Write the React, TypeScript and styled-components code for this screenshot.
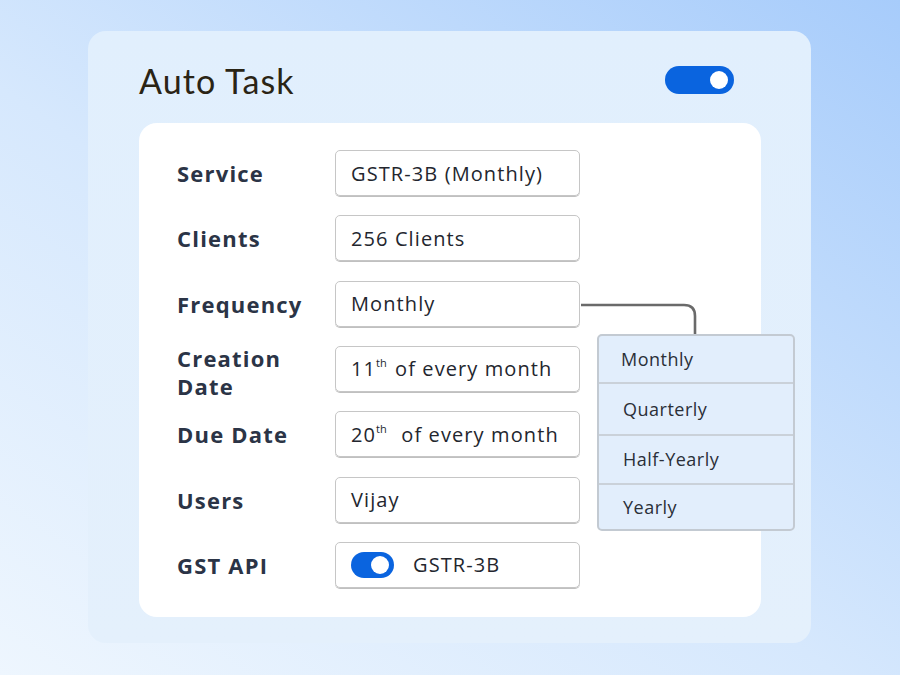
import { FC } from 'react';
import styled, { createGlobalStyle } from 'styled-components';

const GlobalStyle = createGlobalStyle`
  html, body {
    margin: 0;
    padding: 0;
  }
  body {
    width: 900px;
    height: 675px;
    overflow: hidden;
    font-family: 'Open Sans', 'Liberation Sans', sans-serif;
    background: linear-gradient(35deg, #eef6fe 0%, #d6e8fd 45%, #a7ccfb 100%);
  }
`;

const Page = styled.main`
  padding: 31px 0 0 88px;
`;

const Panel = styled.section`
  width: 723px;
  height: 612px;
  box-sizing: border-box;
  padding: 0 77px 26px 51px;
  border-radius: 18px;
  background: linear-gradient(180deg, #e1effd 0%, #e4f0fc 100%);
  display: flex;
  flex-direction: column;
`;

const Header = styled.header`
  height: 92px;
  padding-top: 6px;
  box-sizing: border-box;
  display: flex;
  align-items: center;
  justify-content: space-between;
`;

const Title = styled.h1`
  margin: 0;
  font-family: 'Lato', sans-serif;
  font-weight: 400;
  font-size: 34px;
  letter-spacing: 1.1px;
  color: #2a2415;
`;

const Toggle = styled.span<{ $w: number; $h: number; $knob: number }>`
  width: ${(p) => p.$w}px;
  height: ${(p) => p.$h}px;
  border-radius: ${(p) => p.$h / 2}px;
  background: #0a64df;
  display: flex;
  align-items: center;
  justify-content: flex-end;
  padding-right: ${(p) => (p.$h - p.$knob) / 2 + 1}px;
  box-sizing: border-box;
  flex-shrink: 0;

  &::after {
    content: '';
    width: ${(p) => p.$knob}px;
    height: ${(p) => p.$knob}px;
    border-radius: 50%;
    background: #fff;
  }
`;

const Card = styled.div`
  position: relative;
  width: 622px;
  height: 494px;
  box-sizing: border-box;
  padding: 27px 0 0 38px;
  background: #fff;
  border-radius: 18px;
  display: flex;
  flex-direction: column;
  gap: 19.33px;
`;

const Row = styled.div`
  display: grid;
  grid-template-columns: 158px 245px;
  grid-template-rows: 46px;
  align-items: center;
`;

const Label = styled.span<{ $drop?: number }>`
  font-weight: 700;
  font-size: 22px;
  line-height: 28px;
  letter-spacing: 1.2px;
  color: #2b3446;
  white-space: nowrap;
  margin-top: ${(p) => p.$drop ?? 0}px;
`;

const Field = styled.div`
  position: relative;
  height: 46px;
  box-sizing: border-box;
  border: 1px solid #c6c6c6;
  box-shadow: 0 1px 0 #c0c0c0;
  border-radius: 5px;
  padding: 0 15px;
  display: flex;
  align-items: center;
  gap: 19px;
  font-size: 20px;
  color: #23262e;
  letter-spacing: 1.1px;
  white-space: nowrap;
`;

const Sup = styled.sup`
  font-size: 11px;
  line-height: 0;
  vertical-align: 9px;
  letter-spacing: 0;
  margin-right: 2px;
`;

const Connector = styled.svg`
  position: absolute;
  left: 244px;
  top: 18px;
  overflow: visible;
`;

const Dropdown = styled.ul`
  position: absolute;
  left: 261px;
  top: 52px;
  width: 198px;
  margin: 0;
  padding: 0;
  list-style: none;
  background: #e2eefc;
  border: 2px solid #c3cad2;
  border-radius: 5px;
  box-sizing: border-box;
`;

const Option = styled.li<{ $h: number; $indent: number }>`
  height: ${(p) => p.$h}px;
  display: flex;
  align-items: center;
  padding-left: ${(p) => p.$indent}px;
  font-size: 18px;
  color: #2a2f38;
  letter-spacing: 0.5px;

  & + & {
    border-top: 2px solid #cad1d9;
  }
`;

const options = [
  { text: 'Monthly', h: 46, indent: 22 },
  { text: 'Quarterly', h: 50, indent: 24 },
  { text: 'Half-Yearly', h: 47, indent: 24 },
  { text: 'Yearly', h: 44, indent: 24 },
];

const FrequencyField: FC = () => (
  <Field>
    Monthly
    <Connector width="120" height="40">
      <path
        d="M1 5 H 104 Q 115 5 115 16 V 35"
        fill="none"
        stroke="#6a6a6a"
        strokeWidth="2.6"
      />
    </Connector>
    <Dropdown>
      {options.map((o) => (
        <Option key={o.text} $h={o.h} $indent={o.indent}>
          {o.text}
        </Option>
      ))}
    </Dropdown>
  </Field>
);

const App: FC = () => (
  <>
    <GlobalStyle />
    <Page>
      <Panel>
        <Header>
          <Title>Auto Task</Title>
          <Toggle $w={69} $h={28} $knob={18} />
        </Header>
        <Card>
          <Row>
            <Label>Service</Label>
            <Field>GSTR-3B (Monthly)</Field>
          </Row>
          <Row>
            <Label>Clients</Label>
            <Field>256 Clients</Field>
          </Row>
          <Row>
            <Label>Frequency</Label>
            <FrequencyField />
          </Row>
          <Row>
            <Label $drop={6}>
              Creation
              <br />
              Date
            </Label>
            <Field>
              <span>
                11<Sup>th</Sup> of every month
              </span>
            </Field>
          </Row>
          <Row>
            <Label>Due Date</Label>
            <Field>
              <span>
                20<Sup>th</Sup>&nbsp; of every month
              </span>
            </Field>
          </Row>
          <Row>
            <Label>Users</Label>
            <Field>Vijay</Field>
          </Row>
          <Row>
            <Label>GST API</Label>
            <Field>
              <Toggle $w={43} $h={26} $knob={18} />
              GSTR-3B
            </Field>
          </Row>
        </Card>
      </Panel>
    </Page>
  </>
);

export default App;
